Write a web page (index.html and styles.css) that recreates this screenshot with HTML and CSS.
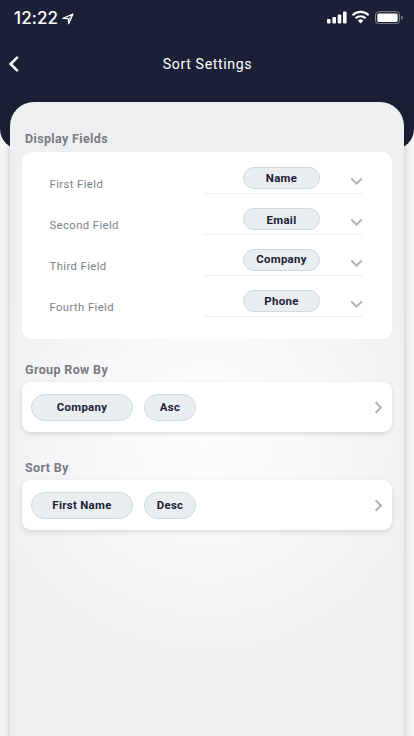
FILE: index.html
```html
<!DOCTYPE html>
<html lang="en">
<head>
<meta charset="utf-8">
<meta name="viewport" content="width=device-width, initial-scale=1">
<title>Sort Settings</title>
<link rel="stylesheet" href="styles.css">
</head>
<body>
<header class="header">
  <div class="status">
    <span class="time">12:22</span>
    <svg class="location" width="12" height="12" viewBox="0 0 12 12"><path d="M1 5.4 11 1 6.7 10.8 6.2 5.6Z" fill="none" stroke="#fff" stroke-width="1.2" stroke-linejoin="round"/><path d="M11 1 6.2 5.6 6.7 10.8Z" fill="#fff" opacity=".55"/></svg>
    <svg class="indicators" width="78" height="14" viewBox="0 0 78 14">
      <g fill="#fff"><rect x="1" y="9" width="3.6" height="4.5" rx="1"/><rect x="6.4" y="7" width="3.6" height="6.5" rx="1"/><rect x="11.7" y="4.5" width="3.6" height="9" rx="1"/><rect x="17" y="1.5" width="3.6" height="12" rx="1"/></g>
      <g fill="none" stroke="#fff" stroke-width="2.1"><path d="M26.6 5.2a11.3 11.3 0 0 1 16 0"/><path d="M29.5 8.3a7.2 7.2 0 0 1 10.2 0"/></g>
      <path d="M31.8 10.4a4.2 4.2 0 0 1 5.6 0L34.6 13.4Z" fill="#fff"/>
      <rect x="49.5" y="1.7" width="24" height="12" rx="3.2" fill="none" stroke="#868996"/>
      <rect x="51.3" y="3.5" width="20.4" height="8.4" rx="1.6" fill="#fff"/>
      <path d="M75.2 5.5q1.7.6 1.7 2.2t-1.7 2.2Z" fill="#868996"/>
    </svg>
  </div>
  <nav class="nav">
    <svg class="back" width="12" height="18" viewBox="0 0 12 18"><path d="m9.8 1.8-7.2 7.2 7.2 7.2" fill="none" stroke="#fff" stroke-width="2.5"/></svg>
    <h1 class="title">Sort Settings</h1>
  </nav>
</header>
<main class="sheet">
  <h2 class="heading">Display Fields</h2>
  <section class="fields">
    <div class="field"><span class="label">First Field</span><div class="select"><span class="pill">Name</span><svg class="down" width="13" height="9" viewBox="0 0 13 9"><path d="m1.3 1.5 5.2 5.2 5.2-5.2"/></svg></div></div>
    <div class="field"><span class="label">Second Field</span><div class="select"><span class="pill pill-low">Email</span><svg class="down" width="13" height="9" viewBox="0 0 13 9"><path d="m1.3 1.5 5.2 5.2 5.2-5.2"/></svg></div></div>
    <div class="field"><span class="label">Third Field</span><div class="select"><span class="pill pill-high">Company</span><svg class="down" width="13" height="9" viewBox="0 0 13 9"><path d="m1.3 1.5 5.2 5.2 5.2-5.2"/></svg></div></div>
    <div class="field"><span class="label">Fourth Field</span><div class="select"><span class="pill">Phone</span><svg class="down" width="13" height="9" viewBox="0 0 13 9"><path d="m1.3 1.5 5.2 5.2 5.2-5.2"/></svg></div></div>
  </section>
  <h2 class="heading">Group Row By</h2>
  <section class="rule">
    <span class="chip chip-wide">Company</span><span class="chip">Asc</span>
    <svg class="next" width="9" height="13" viewBox="0 0 9 13"><path d="m1.7 1.3 5.2 5.2-5.2 5.2"/></svg>
  </section>
  <h2 class="heading">Sort By</h2>
  <section class="rule">
    <span class="chip chip-wide">First Name</span><span class="chip">Desc</span>
    <svg class="next" width="9" height="13" viewBox="0 0 9 13"><path d="m1.7 1.3 5.2 5.2-5.2 5.2"/></svg>
  </section>
</main>
</body>
</html>
```
FILE: styles.css
```css
* { box-sizing: border-box; }
body {
  margin: 0;
  height: 736px;
  overflow: hidden;
  display: flex;
  flex-direction: column;
  font-family: Roboto, "Liberation Sans", sans-serif;
  background: #f3f4f4;
}
svg { display: block; flex: none; }
.header {
  flex: none;
  height: 149px;
  background: #1b2036;
  border-radius: 0 0 20px 20px;
}
.status {
  display: flex;
  align-items: center;
  height: 36px;
  padding: 0 10px 0 14px;
}
.time {
  width: 44px;
  color: #fff;
  font: 500 17px/20px Inter, sans-serif;
  letter-spacing: .1px;
  white-space: nowrap;
}
.location { margin: 1px 0 0 4px; }
.indicators { margin-left: auto; margin-top: -2px; }
.nav {
  display: grid;
  grid-template-columns: 24px 1fr 24px;
  align-items: center;
  height: 56px;
  padding: 0 8px;
}
.title {
  margin: 0;
  padding-left: 1px;
  text-align: center;
  color: #fff;
  font-size: 14.2px;
  font-weight: 400;
  letter-spacing: .6px;
}
.sheet {
  flex: none;
  height: 660px;
  margin: -47px 10px 0;
  padding: 0 12px;
  border-radius: 24px 24px 0 0;
  background: radial-gradient(circle 240px at 197px 330px, #fdfdfd 0, #f9f9fa 40%, #eeeff1 100%);
  box-shadow: 0 0 7px rgba(0, 0, 0, .2);
}
.heading {
  margin: 0;
  height: 50px;
  padding: 29px 3px 0;
  color: #797b83;
  font-size: 12.5px;
  line-height: 16px;
  font-weight: 700;
  letter-spacing: .36px;
}
.fields {
  height: 187px;
  padding: 1px 29px 0 27.5px;
  border-radius: 10px;
  background: #fff;
}
.fields + .heading { height: 43px; padding-top: 23px; }
.rule + .heading { height: 48px; padding-top: 28px; }
.field {
  display: flex;
  justify-content: space-between;
  height: 41px;
}
.label {
  padding-top: 24px;
  color: #7d7f87;
  font-size: 11.3px;
  line-height: 16px;
  letter-spacing: .4px;
}
.select {
  display: flex;
  width: 160px;
  padding: 14px 0 0 40px;
  border-bottom: 1px solid #efefef;
}
.pill, .chip {
  border: 1px solid #cfdadd;
  background: #ebeef1;
  color: #1b2036;
  font-size: 11.4px;
  font-weight: 700;
  letter-spacing: .32px;
  text-align: center;
}
.pill {
  width: 77px;
  height: 22px;
  border-radius: 11px;
  line-height: 21px;
}
.pill-low { padding-top: 1px; }
.pill-high { line-height: 18px; }
.down { margin: 10px 0 0 30px; }
.down path, .next path { fill: none; stroke: #b1b1b1; stroke-width: 2; }
.rule {
  display: flex;
  align-items: center;
  gap: 11px;
  height: 50px;
  padding: 1px 9px 0;
  border-radius: 9px;
  background: #fff;
  box-shadow: 0 2px 5px rgba(0, 0, 0, .12);
}
.chip {
  width: 52px;
  height: 27px;
  border-radius: 14px;
  line-height: 25px;
}
.chip-wide { width: 102px; }
.next { margin-left: auto; }
```
